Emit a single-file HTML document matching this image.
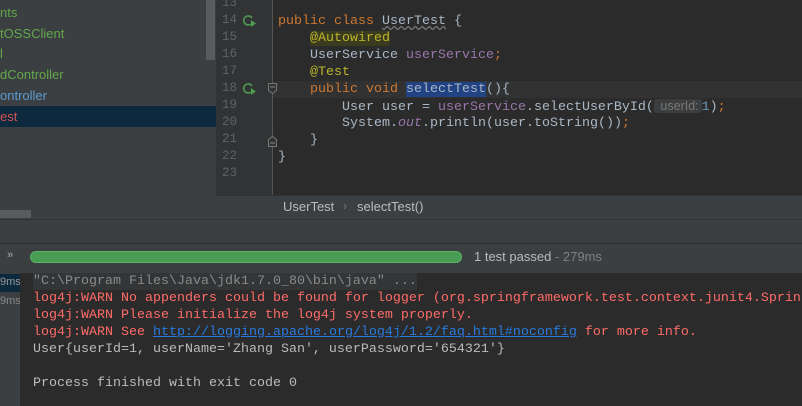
<!DOCTYPE html>
<html><head><style>
html,body{margin:0;width:802px;height:406px;overflow:hidden}
body{background:#2b2b2b;position:relative;font-family:"Liberation Sans",sans-serif}
#wrap{position:absolute;left:0;top:0;width:802px;height:406px;overflow:hidden}
.abs{position:absolute}
.mono{font-family:"Liberation Mono",monospace;font-size:13.33px;white-space:pre}
#left{left:0;top:0;width:216px;height:219px;background:#3c3f41;overflow:hidden}
.li{position:absolute;left:0;font-size:13px;height:21px;line-height:21px;width:216px}
#gut{left:216px;top:0;width:57px;height:195px;background:#313335}
.ln{position:absolute;left:216px;width:21px;text-align:right;color:#606366;font-size:12.5px;font-family:"Liberation Mono",monospace}
.cl{position:absolute;left:278px;height:17px;line-height:17px}
.k{color:#cc7832}.f{color:#9876aa}.a{color:#bbb529}.p{color:#a9b7c6}
.c{position:absolute;left:33px;height:17px;line-height:17px}
</style></head><body><div id="wrap">
<div id="left" class="abs">
<div class="li" style="top:2px;color:#62a84b">nts</div>
<div class="li" style="top:23px;color:#62a84b">tOSSClient</div>
<div class="li" style="top:43px;color:#62a84b">l</div>
<div class="li" style="top:64px;color:#62a84b">dController</div>
<div class="li" style="top:85px;color:#5c9ad0">ontroller</div>
<div class="li" style="top:106px;background:#0d293e;color:#d25252">est</div>
<div class="abs" style="left:206px;top:0;width:9px;height:60px;background:#595b5d"></div>
<div class="abs" style="left:0;top:210px;width:31px;height:8px;background:#595b5d"></div>
</div>
<div class="abs" style="left:216px;top:0;width:1px;height:219px;background:#2b2b2b"></div>
<div id="gut" class="abs"></div>
<div class="abs" style="left:272px;top:0;width:1px;height:195px;background:#555"></div>
<div class="abs" style="left:273px;top:81px;width:529px;height:17px;background:#323232"></div>
<div class="mono">
<div class="ln" style="top:-4px">13</div><div class="ln" style="top:13px">14</div><div class="ln" style="top:30px">15</div><div class="ln" style="top:47px">16</div><div class="ln" style="top:64px">17</div><div class="ln" style="top:81px">18</div><div class="ln" style="top:98px">19</div><div class="ln" style="top:115px">20</div><div class="ln" style="top:132px">21</div><div class="ln" style="top:149px">22</div><div class="ln" style="top:166px">23</div>
</div>
<svg class="abs" style="left:242px;top:14px" width="16" height="14"><path d="M10 4 A4.5 4.5 0 1 0 9 10" stroke="#4e9a4e" stroke-width="1.6" fill="none"/><path d="M9 6 L14 9.5 L9 13Z" fill="#4e9a4e"/></svg>
<svg class="abs" style="left:242px;top:82px" width="16" height="14"><path d="M10 4 A4.5 4.5 0 1 0 9 10" stroke="#4e9a4e" stroke-width="1.6" fill="none"/><path d="M9 6 L14 9.5 L9 13Z" fill="#4e9a4e"/></svg>
<svg class="abs" style="left:268px;top:83px" width="9" height="12"><path d="M0.5 0.5H8.5V7.5L4.5 10.5L0.5 7.5Z" fill="#313335" stroke="#777"/><path d="M2 4H7" stroke="#888"/></svg>
<svg class="abs" style="left:268px;top:135px" width="9" height="12"><path d="M0.5 11.5H8.5V4.5L4.5 1.5L0.5 4.5Z" fill="#313335" stroke="#777"/><path d="M2 8H7" stroke="#888"/></svg>
<div class="mono">
<div class="cl" style="top:13px"><span class="k">public class </span><span class="p" style="text-decoration:underline wavy #777">UserTest</span><span class="p"> {</span></div>
<div class="cl" style="top:30px">    <span class="a" style="background:#3b3b1f">@Autowired</span></div>
<div class="cl p" style="top:47px">    UserService <span class="f">userService</span><span class="k">;</span></div>
<div class="cl" style="top:64px">    <span class="a">@Test</span></div>
<div class="cl" style="top:81px">    <span class="k">public void </span><span style="background:#214283;color:#a9b7c6">selectTest</span><span class="p">(){</span></div>
<div class="cl p" style="top:98px">        User user = <span class="f">userService</span>.selectUserById(<span style="background:#3b3d3f;color:#787878;font-family:'Liberation Sans';font-size:12.5px;border-radius:3px;padding:0 3px"> userId:</span><span style="color:#6897bb">1</span>)<span class="k">;</span></div>
<div class="cl p" style="top:115px">        System.<span class="f" style="font-style:italic">out</span>.println(user.toString())<span class="k">;</span></div>
<div class="cl p" style="top:132px">    }</div>
<div class="cl p" style="top:149px">}</div>
</div>
<div class="abs" style="left:216px;top:195px;width:586px;height:24px;background:#3c3f41;border-top:1px solid #323232"></div>
<div class="abs" style="left:283px;top:199px;font-size:13px;color:#bbb">UserTest</div>
<div class="abs" style="left:343px;top:199px;font-size:12px;color:#777">›</div>
<div class="abs" style="left:357px;top:199px;font-size:13px;color:#bbb">selectTest()</div>
<div class="abs" style="left:0;top:219px;width:802px;height:24px;background:#3c3f41;border-top:1px solid #333"></div>
<div class="abs" style="left:0;top:243px;width:802px;height:29px;background:#3c3f41;border-top:1px solid #2b2b2b"></div>
<div class="abs" style="left:7px;top:249px;font-size:11px;color:#aaa">»</div>
<div class="abs" style="left:30px;top:251px;width:430px;height:10px;background:#499c54;border:1px solid #5ab063;border-radius:6px"></div>
<div class="abs" style="left:474px;top:249px;font-size:13px;color:#bbb">1 test passed <span style="color:#808080">- 279ms</span></div>
<div class="abs" style="left:0;top:272px;width:20px;height:134px;background:#3c3f41"></div>
<div class="abs" style="left:0;top:274px;width:20px;height:18px;background:#0d293e"></div>
<div class="abs" style="left:0;top:276px;font-size:11px;color:#999;width:20px;overflow:hidden">9ms</div>
<div class="abs" style="left:0;top:295px;font-size:11px;color:#888;width:20px;overflow:hidden">9ms</div>
<div class="mono">
<div class="c" style="top:273px;color:#8a8a8a;background:#333537">"C:\Program Files\Java\jdk1.7.0_80\bin\java" ...</div>
<div class="c" style="top:290px;color:#ff6b68">log4j:WARN No appenders could be found for logger (org.springframework.test.context.junit4.Sprin</div>
<div class="c" style="top:307px;color:#ff6b68">log4j:WARN Please initialize the log4j system properly.</div>
<div class="c" style="top:324px;color:#ff6b68">log4j:WARN See <span style="color:#287bde;text-decoration:underline">http://logging.apache.org/log4j/1.2/faq.html#noconfig</span> for more info.</div>
<div class="c" style="top:341px;color:#bbb">User{userId=1, userName='Zhang San', userPassword='654321'}</div>
<div class="c" style="top:375px;color:#bbb">Process finished with exit code 0</div>
</div>
</div></body></html>
